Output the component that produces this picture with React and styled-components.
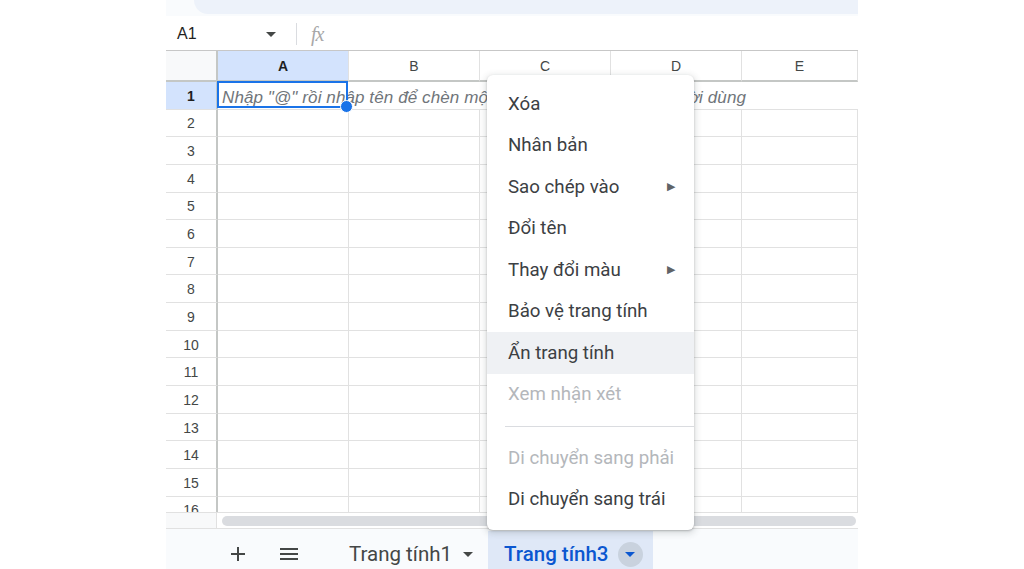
import styled, { createGlobalStyle } from "styled-components";

const GlobalStyle = createGlobalStyle`
    html, body {
        margin: 0;
        padding: 0;
        background: #ffffff;
    }
    body {
        font-family: "Liberation Sans", Arial, sans-serif;
    }
`

const columns = ['A', 'B', 'C', 'D', 'E']
const rows = Array.from({ length: 15 }, (_, i) => i + 2)

const menuItems = [
    { label: 'Xóa' },
    { label: 'Nhân bản' },
    { label: 'Sao chép vào', sub: true },
    { label: 'Đổi tên' },
    { label: 'Thay đổi màu', sub: true },
    { label: 'Bảo vệ trang tính' },
    { label: 'Ẩn trang tính', hover: true },
    { label: 'Xem nhận xét', disabled: true },
    { separator: true },
    { label: 'Di chuyển sang phải', disabled: true },
    { label: 'Di chuyển sang trái' },
]

function Caret({ color = '#444746', size = 10 }) {
    return (
        <svg width={size} height={size / 2} viewBox="0 0 10 5">
            <path d="M0 0 L10 0 L5 5 Z" fill={color} />
        </svg>
    )
}

export default function App() {
    return (
        <>
            <GlobalStyle />
            <Page>
                <Frame>
                    <TopStrip>
                        <SearchBox />
                    </TopStrip>

                    <FormulaBar>
                        <NameBox>
                            <span>A1</span>
                            <Caret />
                        </NameBox>
                        <Divider />
                        <Fx>fx</Fx>
                    </FormulaBar>

                    <Grid>
                        <Corner />
                        {columns.map((c, i) => (
                            <ColHeader key={c} $selected={i === 0}>{c}</ColHeader>
                        ))}

                        <RowHeader $selected>1</RowHeader>
                        <FirstRowCell>
                            <Placeholder>Nhập "@" rồi nhập tên để chèn một khối thông minh như người dùng</Placeholder>
                            <Selection>
                                <Handle />
                            </Selection>
                        </FirstRowCell>

                        {rows.map(r => (
                            <Row key={r}>
                                <RowHeader>{r}</RowHeader>
                                {columns.map(c => <Cell key={c} />)}
                            </Row>
                        ))}
                    </Grid>

                    <ScrollRow>
                        <ScrollSpacer />
                        <Thumb />
                    </ScrollRow>

                    <TabBar>
                        <IconButton>
                            <svg width="16" height="16" viewBox="0 0 16 16">
                                <path d="M8 1 V15 M1 8 H15" stroke="#444746" strokeWidth="2" />
                            </svg>
                        </IconButton>
                        <IconButton>
                            <svg width="20" height="14" viewBox="0 0 20 14">
                                <path d="M1 2 H19 M1 7 H19 M1 12 H19" stroke="#444746" strokeWidth="2" />
                            </svg>
                        </IconButton>
                        <SheetTab>
                            Trang tính1
                            <CaretWrap><Caret /></CaretWrap>
                        </SheetTab>
                        <SheetTab $active>
                            Trang tính3
                            <CaretCircle><Caret color="#0b57d0" /></CaretCircle>
                        </SheetTab>
                    </TabBar>

                    <Menu>
                        {menuItems.map((item, i) =>
                            item.separator ? (
                                <Separator key={i} />
                            ) : (
                                <MenuItem key={i} $disabled={item.disabled} $hover={item.hover}>
                                    <span>{item.label}</span>
                                    {item.sub && <SubArrow>▶</SubArrow>}
                                </MenuItem>
                            )
                        )}
                    </Menu>
                </Frame>
            </Page>
        </>
    )
}

const Page = styled.div`
    width: 1024px;
    height: 569px;
    overflow: hidden;
    padding-left: 166px;
    box-sizing: border-box;
`

const Frame = styled.div`
    position: relative;
    width: 692px;
    height: 569px;
    display: flex;
    flex-direction: column;
    overflow: hidden;
    background: #ffffff;
`

const TopStrip = styled.div`
    height: 16px;
    flex-shrink: 0;
    background: #f9fbfd;
    padding-left: 28px;
`

const SearchBox = styled.div`
    height: 14px;
    background: #edf2fa;
    border-radius: 0 0 0 16px;
`

const FormulaBar = styled.div`
    height: 35px;
    flex-shrink: 0;
    display: flex;
    align-items: center;
    padding-top: 2px;
    box-sizing: border-box;
    border-bottom: 1px solid #c7c7c7;
    background: #ffffff;
`

const NameBox = styled.div`
    width: 120px;
    display: flex;
    align-items: center;
    justify-content: space-between;
    padding: 0 10px 0 11px;
    box-sizing: border-box;
    font-size: 16px;
    color: #1f1f1f;
`

const Divider = styled.div`
    width: 1px;
    height: 22px;
    background: #dadce0;
    margin-left: 10px;
`

const Fx = styled.div`
    margin-left: 14px;
    font-family: "Liberation Serif", "Times New Roman", serif;
    font-style: italic;
    font-size: 20px;
    color: #a8a8a8;
    letter-spacing: -1px;
`

const Grid = styled.div`
    height: 461px;
    flex-shrink: 0;
    overflow: hidden;
    display: grid;
    grid-template-columns: 52px repeat(4, 131px) 1fr;
    grid-template-rows: 31px 27.65px;
    grid-auto-rows: 27.65px;
    font-size: 14px;
    color: #444746;
`

const Row = styled.div`
    display: contents;
`

const Corner = styled.div`
    background: #f8f9fa;
    border-right: 2px solid #c4c7c5;
    border-bottom: 2px solid #c4c7c5;
`

const ColHeader = styled.div`
    display: flex;
    align-items: center;
    justify-content: center;
    border-right: 1px solid #e1e1e1;
    border-bottom: 2px solid #c4c7c5;
    background: ${p => p.$selected ? '#d3e3fd' : '#ffffff'};
    font-weight: ${p => p.$selected ? 'bold' : 'normal'};
    color: ${p => p.$selected ? '#1f1f1f' : '#444746'};
`

const RowHeader = styled.div`
    display: flex;
    align-items: center;
    justify-content: center;
    padding-top: 1px;
    border-right: 2px solid #c4c7c5;
    border-bottom: 1px solid #e1e1e1;
    background: ${p => p.$selected ? '#d3e3fd' : '#ffffff'};
    font-weight: ${p => p.$selected ? 'bold' : 'normal'};
    color: ${p => p.$selected ? '#1f1f1f' : '#444746'};
`

const Cell = styled.div`
    border-right: 1px solid #e1e1e1;
    border-bottom: 1px solid #e1e1e1;
`

const FirstRowCell = styled.div`
    grid-column: 2 / -1;
    position: relative;
    display: flex;
    align-items: flex-end;
    padding-bottom: 1px;
    border-bottom: 1px solid #e1e1e1;
`

const Placeholder = styled.div`
    padding-left: 4px;
    white-space: nowrap;
    font-style: italic;
    font-size: 17px;
    color: #70757a;
    letter-spacing: 0.1px;
`

const Selection = styled.div`
    position: absolute;
    left: -1px;
    top: -1px;
    width: 131px;
    height: 27px;
    border: 2px solid #1a73e8;
    box-sizing: border-box;
`

const Handle = styled.div`
    position: absolute;
    right: -7px;
    bottom: -7px;
    width: 11px;
    height: 11px;
    border-radius: 50%;
    background: #1a73e8;
    border: 1px solid #ffffff;
`

const ScrollRow = styled.div`
    height: 15px;
    flex-shrink: 0;
    display: flex;
    align-items: center;
    border-top: 1px solid #e1e1e1;
    border-bottom: 1px solid #e1e1e1;
    background: #ffffff;
`

const ScrollSpacer = styled.div`
    width: 50px;
    height: 100%;
    border-right: 1px solid #e1e1e1;
    background: #f8f9fa;
`

const Thumb = styled.div`
    flex: 1;
    height: 10px;
    margin: 0 2px 0 5px;
    border-radius: 5px;
    background: #dadce0;
`

const TabBar = styled.div`
    flex: 1;
    display: flex;
    align-items: flex-start;
    padding: 2px 0 0 56px;
    background: #f9fbfd;
    font-family: Roboto, "Liberation Sans", sans-serif;
`

const IconButton = styled.div`
    width: 32px;
    height: 46px;
    display: flex;
    align-items: center;
    justify-content: center;
    margin-right: 19px;
`

const SheetTab = styled.div`
    height: 46px;
    display: flex;
    align-items: center;
    gap: ${p => p.$active ? '9px' : '11px'};
    padding: ${p => p.$active ? '0 10px 0 16px' : '0 15px 0 25px'};
    background: ${p => p.$active ? '#dfe8f7' : 'transparent'};
    color: ${p => p.$active ? '#0b57d0' : '#444746'};
    font-size: 20.5px;
    font-weight: ${p => p.$active ? 500 : 400};
`

const CaretWrap = styled.div`
    display: flex;
    align-items: center;
`

const CaretCircle = styled.div`
    width: 25px;
    height: 25px;
    border-radius: 50%;
    background: #c9d2de;
    display: flex;
    align-items: center;
    justify-content: center;
`

const Menu = styled.div`
    position: absolute;
    left: 321px;
    top: 75px;
    width: 207px;
    padding: 8px 0 10px;
    background: #ffffff;
    border-radius: 6px;
    box-shadow: 0 1px 2px rgba(60, 64, 67, 0.3), 0 2px 6px 2px rgba(60, 64, 67, 0.15);
    font-family: Roboto, "Liberation Sans", sans-serif;
    font-size: 18.7px;
    z-index: 5;
`

const MenuItem = styled.div`
    height: 41.5px;
    display: flex;
    align-items: center;
    justify-content: space-between;
    padding: 0 19px 0 21px;
    color: ${p => p.$disabled ? '#b4b7bb' : '#3c4043'};
    background: ${p => p.$hover ? '#eff1f4' : 'transparent'};
`

const SubArrow = styled.span`
    font-size: 11px;
    color: #5f6368;
`

const Separator = styled.div`
    height: 1px;
    background: #dadce0;
    margin: 11px 0 10px 18px;
`
